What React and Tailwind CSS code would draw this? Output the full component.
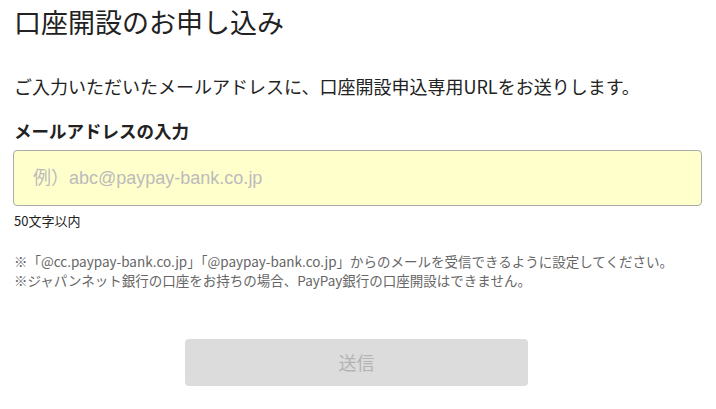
import React from 'react';

const App = () => {
  return (
    <div className="min-h-screen bg-white px-[14px] pt-[4px] text-[#222] font-['Meiryo','Noto_Sans_CJK_JP',sans-serif]">
      {/* Title */}
      <h1 className="text-[27px] leading-[35px] font-normal text-[#222]">口座開設のお申し込み</h1>

      <p className="mt-[34px] text-[18px] leading-[26px] text-[#222]">
        ご入力いただいたメールアドレスに、口座開設申込専用URLをお送りします。
      </p>

      {/* Email field */}
      <label className="mt-[19px] block text-[17.5px] leading-[26px] font-bold text-[#222]">
        メールアドレスの入力
      </label>
      <input
        type="email"
        placeholder="例）abc@paypay-bank.co.jp"
        className="mt-[6px] block h-[56px] w-[689px] -ml-px rounded-[4px] border border-[#aaaaaa] bg-[#ffffcc] px-[19px] text-[18px] text-[#222] placeholder:text-[#bbbbbb] outline-none font-['Liberation_Sans','Noto_Sans_CJK_JP',sans-serif]"
      />
      <p className="mt-[6px] text-[13px] leading-[18px] text-[#222]">50文字以内</p>

      {/* Notes */}
      <div className="mt-[22px] text-[13.5px] leading-[19px] text-[#666]">
        <p>※「@cc.paypay-bank.co.jp」「@paypay-bank.co.jp」からのメールを受信できるように設定してください。</p>
        <p>※ジャパンネット銀行の口座をお持ちの場合、PayPay銀行の口座開設はできません。</p>
      </div>

      <div className="mt-[49px] flex justify-center">
        <button
          disabled
          className="h-[47px] w-[343px] -ml-[3px] rounded-[4px] bg-[#dcdcdc] text-[18px] text-[#b3b3b3]"
        >
          送信
        </button>
      </div>
    </div>
  );
};

export default App;
